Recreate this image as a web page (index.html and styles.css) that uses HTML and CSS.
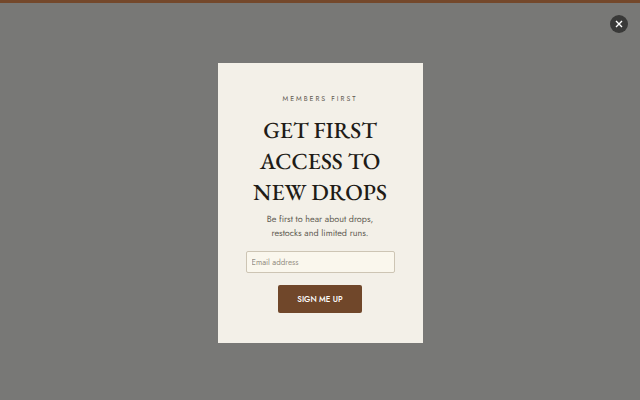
FILE: index.html
```html
<!DOCTYPE html>
<html lang="en">
<head>
<meta charset="utf-8">
<meta name="viewport" content="width=device-width, initial-scale=1">
<title>Members first</title>
<link rel="stylesheet" href="styles.css">
</head>
<body>
<main class="overlay">
  <button class="close" type="button" aria-label="Close">
    <svg class="close-icon" viewBox="0 0 8 8" aria-hidden="true"><path d="M1 1l6 6M7 1l-6 6"/></svg>
  </button>
  <section class="card" role="dialog" aria-labelledby="title">
    <p class="eyebrow">MEMBERS FIRST</p>
    <h1 class="title" id="title">GET FIRST ACCESS TO NEW DROPS</h1>
    <p class="copy">Be first to hear about drops, restocks and limited runs.</p>
    <form class="form">
      <input class="field" type="email" placeholder="Email address" aria-label="Email address">
      <button class="submit" type="submit">SIGN ME UP</button>
    </form>
  </section>
</main>
</body>
</html>
```
FILE: styles.css
```css
* {
  box-sizing: border-box;
}

body {
  margin: 0;
  font-family: Jost, Lato, "Liberation Sans", sans-serif;
  text-rendering: geometricPrecision;
}

.overlay {
  position: relative;
  display: flex;
  align-items: center;
  justify-content: center;
  min-height: 100vh;
  padding-top: 3px;
  border-top: 3px solid #74482b;
  background: #787876;
}

.close {
  position: absolute;
  top: 12px;
  right: 12px;
  display: flex;
  align-items: center;
  justify-content: center;
  width: 18px;
  height: 18px;
  padding: 0;
  border: 0;
  border-radius: 50%;
  background: #393938;
}

.close-icon {
  width: 8px;
  height: 8px;
  fill: none;
  stroke: #fff;
  stroke-width: 1.4;
}

.card {
  width: 32%;
  min-width: 205px;
  padding: 28px 28px 30px;
  background: #f3f0e8;
  text-align: center;
}

.eyebrow {
  margin: 0 0 8px;
  color: #5f5a51;
  font-size: 7px;
  font-weight: 400;
  line-height: 16px;
  letter-spacing: 2px;
}

.title {
  margin: 0;
  color: #1f1c17;
  font-family: "EB Garamond", "Liberation Serif", serif;
  font-size: 23px;
  font-weight: 500;
  line-height: 31px;
}

.copy {
  margin: 5px 0 10px;
  padding: 0 16px;
  color: #5f5b52;
  font-size: 9px;
  line-height: 14px;
}

.form {
  display: flex;
  flex-direction: column;
  align-items: center;
  gap: 12px;
}

.field {
  width: 100%;
  height: 22px;
  padding: 0 5px;
  border: 1px solid #cdc5b4;
  border-radius: 2px;
  background: #faf7ed;
  color: #1f1c17;
  font: inherit;
  font-size: 8px;
}

.field::placeholder {
  color: #969084;
  opacity: 1;
}

.submit {
  height: 28px;
  padding: 0 19px;
  border: 0;
  border-radius: 2px;
  background: #70472a;
  color: #fff;
  font: inherit;
  font-size: 8px;
  font-weight: 500;
}
```
